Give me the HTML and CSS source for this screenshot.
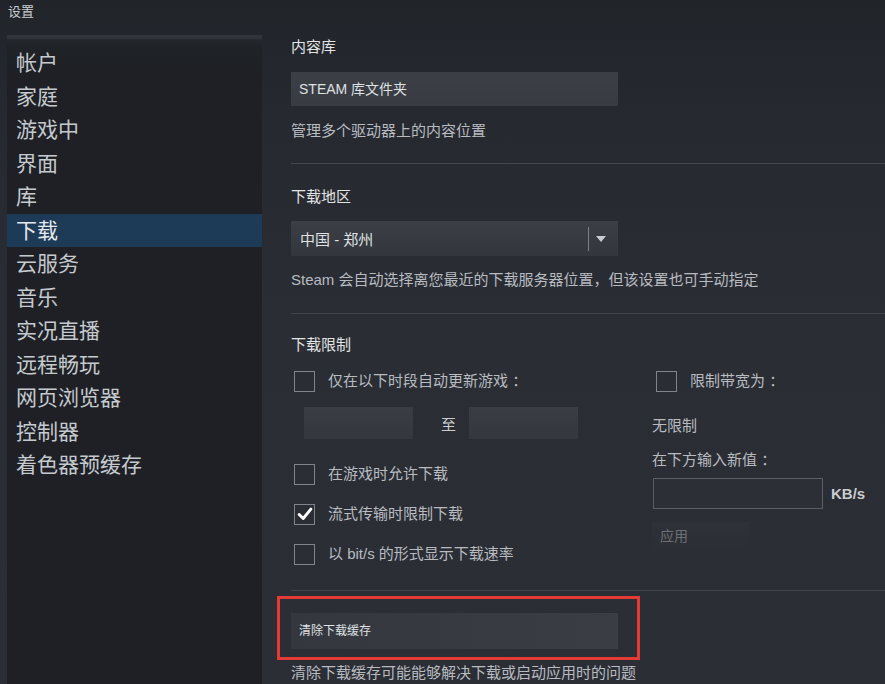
FILE: index.html
```html
<!DOCTYPE html>
<html lang="zh-CN">
<head>
<meta charset="utf-8">
<title>设置</title>
<link rel="stylesheet" href="styles.css">
</head>
<body>
<div class="titlebar">设置</div>
<div class="main">
  <nav class="sidebar">
    <div class="nav-item">帐户</div>
    <div class="nav-item">家庭</div>
    <div class="nav-item">游戏中</div>
    <div class="nav-item">界面</div>
    <div class="nav-item">库</div>
    <div class="nav-item active">下载</div>
    <div class="nav-item">云服务</div>
    <div class="nav-item">音乐</div>
    <div class="nav-item">实况直播</div>
    <div class="nav-item">远程畅玩</div>
    <div class="nav-item">网页浏览器</div>
    <div class="nav-item">控制器</div>
    <div class="nav-item">着色器预缓存</div>
  </nav>
  <div class="content">
    <section class="sec sec-lib">
      <div class="head">内容库</div>
      <div class="btn btn-lib">STEAM 库文件夹</div>
      <div class="desc desc-lib">管理多个驱动器上的内容位置</div>
    </section>
    <section class="sec sec-region">
      <div class="head">下载地区</div>
      <div class="dropdown">
        <span class="dd-text">中国 - 郑州</span>
        <span class="dd-sep"></span>
        <span class="dd-arrow"></span>
      </div>
      <div class="desc desc-region">Steam 会自动选择离您最近的下载服务器位置，但该设置也可手动指定</div>
    </section>
    <section class="sec sec-limit">
      <div class="head">下载限制</div>
      <div class="cols">
        <div class="col-left">
          <div class="check-row row-1"><span class="box"></span><span class="label">仅在以下时段自动更新游戏 ：</span></div>
          <div class="time-row">
            <span class="time-input"></span>
            <span class="to">至</span>
            <span class="time-input"></span>
          </div>
          <div class="check-row row-2"><span class="box"></span><span class="label">在游戏时允许下载</span></div>
          <div class="check-row row-3"><span class="box checked"><svg viewBox="0 0 20 20" width="18" height="18"><path d="M3.5 10.5 L8 15 L16.5 4.5" fill="none" stroke="#ffffff" stroke-width="3.2" stroke-linecap="round" stroke-linejoin="round"/></svg></span><span class="label">流式传输时限制下载</span></div>
          <div class="check-row row-3"><span class="box"></span><span class="label">以 bit/s 的形式显示下载速率</span></div>
        </div>
        <div class="col-right">
          <div class="check-row row-1"><span class="box"></span><span class="label">限制带宽为 ：</span></div>
          <div class="plain unl">无限制</div>
          <div class="plain newval">在下方输入新值 ：</div>
          <div class="rate-row">
            <span class="rate-input"></span>
            <span class="unit">KB/s</span>
          </div>
          <div class="apply">应用</div>
        </div>
      </div>
    </section>
    <section class="sec sec-cache">
      <div class="highlight">
        <div class="btn btn-cache">清除下载缓存</div>
      </div>
      <div class="desc desc-cache">清除下载缓存可能能够解决下载或启动应用时的问题</div>
    </section>
  </div>
</div>
</body>
</html>
```
FILE: styles.css
```css
html, body {
  margin: 0;
  padding: 0;
}
body {
  width: 885px;
  height: 684px;
  overflow: hidden;
  font-family: "Liberation Sans", "Noto Sans CJK SC", sans-serif;
  background: linear-gradient(180deg, #212429 0px, #262930 120px, #2a2d34 320px, #2b2e35 684px);
  color: #dcdedf;
}
.titlebar {
  height: 35px;
  box-sizing: border-box;
  padding-left: 8px;
  font-size: 13px;
  line-height: 24px;
  color: #c9cdd1;
}
.main {
  display: flex;
  height: 649px;
}
.sidebar {
  margin-left: 7px;
  width: 255px;
  flex: none;
  box-sizing: border-box;
  padding-top: 11px;
  background: linear-gradient(180deg, #30343b 0px, #30343b 3px, #24272d 5px, #1f2227 12px, #1e2025 40px, #1e2025 100%);
}
.nav-item {
  height: 33.5px;
  line-height: 33.5px;
  padding-left: 9px;
  font-size: 21px;
  color: #c5cacf;
  white-space: nowrap;
}
.nav-item.active {
  background: #1d3a57;
  color: #e6e9ec;
}
.content {
  flex: 1;
  padding-left: 29px;
  min-width: 0;
}
.sec {
  border-bottom: 1px solid #42464d;
}
.head {
  font-size: 15px;
  line-height: 20px;
  color: #e2e4e6;
}
.desc, .plain, .label {
  font-size: 15px;
  line-height: 20px;
  color: #b8bcc0;
  white-space: nowrap;
}
.btn {
  width: 327px;
  box-sizing: border-box;
  padding-left: 8px;
  color: #dfe1e3;
  background: linear-gradient(180deg, #3c3f46 0%, #383b42 100%);
}
.sec-lib {
  padding-top: 2px;
  padding-bottom: 22px;
}
.btn-lib {
  margin-top: 15px;
  height: 34px;
  line-height: 34px;
  font-size: 14px;
}
.desc-lib {
  margin-top: 15px;
}
.sec-region {
  padding-top: 23px;
  padding-bottom: 23px;
}
.dropdown {
  margin-top: 14px;
  width: 327px;
  height: 35px;
  display: flex;
  align-items: center;
  background: linear-gradient(180deg, #3b3e45 0%, #33363c 100%);
}
.dd-text {
  padding-left: 9px;
  font-size: 15px;
  color: #dfe1e3;
  width: 297px;
  box-sizing: border-box;
}
.dd-sep {
  width: 1px;
  height: 24px;
  background: #7d8085;
}
.dd-arrow {
  margin-left: 7px;
  width: 0;
  height: 0;
  border-left: 5px solid transparent;
  border-right: 5px solid transparent;
  border-top: 6px solid #c9ccd0;
}
.desc-region {
  margin-top: 14px;
}
.sec-limit {
  padding-top: 21px;
  padding-bottom: 26px;
}
.cols {
  display: flex;
}
.col-left {
  width: 361px;
}
.check-row {
  display: flex;
  align-items: center;
  height: 20px;
  margin-left: 3px;
}
.row-1 { margin-top: 16px; }
.row-2 { margin-top: 25px; }
.row-3 { margin-top: 20px; }
.col-right .check-row {
  margin-left: 4px;
}
.box {
  width: 21px;
  height: 21px;
  box-sizing: border-box;
  border: 1px solid #80848a;
  display: flex;
  align-items: center;
  justify-content: center;
  flex: none;
}
.label {
  margin-left: 13px;
}
.time-row {
  margin-top: 16px;
  margin-left: 13px;
  display: flex;
  align-items: center;
  height: 32px;
}
.time-input {
  width: 109px;
  height: 32px;
  background: linear-gradient(180deg, #3a3d44 0%, #34373d 100%);
}
.to {
  font-size: 15px;
  color: #c9cdd1;
  margin-left: 28px;
  margin-right: 13px;
}
.unl {
  margin-top: 25px;
}
.newval {
  margin-top: 14px;
}
.rate-row {
  margin-top: 8px;
  display: flex;
  align-items: center;
}
.rate-input {
  margin-left: 1px;
  width: 170px;
  height: 31px;
  box-sizing: border-box;
  border: 1px solid #5b5f65;
  background: #2c2f35;
}
.unit {
  margin-left: 8px;
  font-size: 15px;
  font-weight: bold;
  color: #c9ccd0;
}
.apply {
  margin-top: 13px;
  width: 98px;
  height: 28px;
  line-height: 28px;
  box-sizing: border-box;
  padding-left: 8px;
  font-size: 14px;
  color: #6c7076;
  background: linear-gradient(180deg, #2e3137 0%, #2b2e34 100%);
}
.sec-cache {
  border-bottom: none;
  padding-top: 5px;
}
.highlight {
  margin-left: -14px;
  width: 363px;
  box-sizing: border-box;
  border: 3px solid #e33a35;
  padding: 14px 0 8px 11px;
}
.btn-cache {
  height: 36px;
  line-height: 36px;
  font-size: 12px;
  background: linear-gradient(90deg, #34373e 0%, #3a3d44 100%);
}
.desc-cache {
  margin-top: 3px;
}
```
